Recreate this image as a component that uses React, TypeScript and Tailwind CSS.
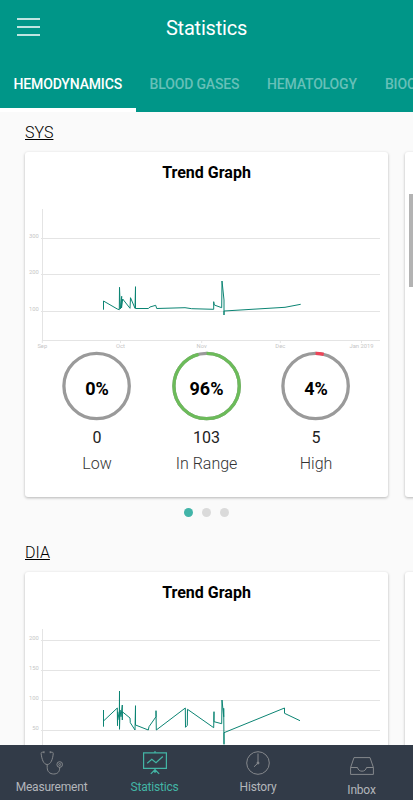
type Label = { text: string; at: number };

const months: Label[] = [
  { text: "Sep", at: 17.3 },
  { text: "Oct", at: 95.5 },
  { text: "Nov", at: 176.7 },
  { text: "Dec", at: 255.3 },
  { text: "Jan 2019", at: 336.5 },
];

const sysRows: Label[] = [
  { text: "300", at: 38.5 },
  { text: "200", at: 74.5 },
  { text: "100", at: 111.5 },
];

const diaRows: Label[] = [
  { text: "200", at: 20.5 },
  { text: "150", at: 50.5 },
  { text: "100", at: 80.5 },
  { text: "50", at: 110.5 },
];

const sysPoints =
  "78.5,109.7 78.5,101 92.3,109 94.3,109.7 94.5,87.3 95.3,109 96.7,96.3 96.5,108 97.7,99 105,108.3 105.5,97.7 110,108.3 110.5,86.7 110.5,108.5 123.3,108.5 125,107 130.7,105.3 131.7,108.5 160,107.7 166.7,108.7 188.7,109.3 188.7,101.7 189.3,105 196.7,107.7 197,81 199,100 199,115 199,111 260,107.3 275.7,104.3";

const diaPoints =
  "78.5,106.7 78.5,90 78.5,101 92.3,88 92.5,105.7 92.7,91.7 94.3,100 94.5,71 94.5,109.3 95,90 96,96.7 97.3,85 97.3,100 97.3,91.7 105,98 105.3,102.7 110,110 110.5,85.7 110.5,105 123.3,110 124,106.7 131,96.7 131,90.7 131.3,110 160.3,88 160.5,107.3 162.3,105.3 162.5,89.3 188.7,107.7 189,91.7 189,101.7 196.7,103.7 197,80 198.7,96.7 198.7,88.3 199,124.3 199,112.7 259.5,88 259.5,93.3 275,100.7";

const rings = [
  { percent: 0, count: 0, label: "Low", color: "#9a9a9a" },
  { percent: 96, count: 103, label: "In Range", color: "#6cbb5a" },
  { percent: 4, count: 5, label: "High", color: "#ee4458" },
];

function TrendChart({ rows, points, top }: { rows: Label[]; points: string; top: number }) {
  return (
    <svg width="363" height="151" viewBox="0 0 363 151" className="block font-['Roboto']">
      <g stroke="#e4e4e4" strokeWidth="1">
        <path d={`M17.5 ${top}V140.5M17 140.5H355`} />
        {rows.map((row) => (
          <path key={row.text} d={`M16 ${row.at}H355`} />
        ))}
        {months.map((month) => (
          <path key={month.text} d={`M${month.at} 140V143`} />
        ))}
      </g>
      <g fill="#c6c6c6" fontSize="5.8">
        {rows.map((row) => (
          <text key={row.text} x="13.7" y={row.at - 0.7} textAnchor="end">
            {row.text}
          </text>
        ))}
        {months.map((month) => (
          <text key={month.text} x={month.at} y="148.4" textAnchor="middle">
            {month.text}
          </text>
        ))}
      </g>
      <polyline points={points} fill="none" stroke="#0b8473" strokeWidth="1" />
    </svg>
  );
}

function Ring({ percent, count, label, color }: (typeof rings)[number]) {
  return (
    <div className="flex w-[109.5px] flex-col items-center">
      <div className="grid size-[70px] place-items-center">
        <svg viewBox="0 0 70 70" className="col-start-1 row-start-1 size-[70px] -rotate-90">
          <circle cx="35" cy="34.6" r="32.7" fill="none" stroke="#9a9a9a" strokeWidth="3.3" />
          {percent > 0 && (
            <circle
              cx="35"
              cy="34.6"
              r="32.7"
              fill="none"
              stroke={color}
              strokeWidth="3.3"
              pathLength="100"
              strokeDasharray={`${percent} 100`}
            />
          )}
        </svg>
        <span className="col-start-1 row-start-1 mt-[6px] text-[18px] leading-6 font-bold text-black">{percent}%</span>
      </div>
      <span className="mt-[5px] text-[16px] leading-6 text-[#222]">{count}</span>
      <span className="mt-[2px] text-[16px] leading-6 font-light text-[#333]">{label}</span>
    </div>
  );
}

function StatCard({ rows, points, top }: { rows: Label[]; points: string; top: number }) {
  return (
    <div className="flex gap-[17px]">
      <div className="h-[344.5px] w-[363px] shrink-0 rounded-[3px] bg-white shadow-[0_1px_3px_rgba(0,0,0,0.28)]">
        <h2 className="h-12 pt-[9px] text-center text-[16px] leading-6 font-bold text-black">Trend Graph</h2>
        <TrendChart rows={rows} points={points} top={top} />
        <div className="flex justify-center">
          {rings.map((ring) => (
            <Ring key={ring.label} {...ring} />
          ))}
        </div>
      </div>
      <div className="h-[344.5px] w-[363px] shrink-0 rounded-[3px] bg-white shadow-[0_1px_3px_rgba(0,0,0,0.28)]" />
    </div>
  );
}

function StethoscopeIcon() {
  return (
    <svg width="24" height="24" viewBox="0 0 24 24" fill="none" stroke="#85888c" strokeWidth="1">
      <path d="M4 1.2H2.2C1.2 1.2 1 2 1.2 3c.6 5 2.3 10.5 6 10.5s5.5-5.5 6-10.5c.1-1-.2-1.8-1.2-1.8h-1.8M4 .2v2M10.2 .2v2" />
      <path d="M7.2 13.5v3c0 4 2.5 6.5 6.5 6.5s6-2.5 6-6v-1" />
      <circle cx="19.7" cy="13.5" r="2.8" />
      <circle cx="19.7" cy="13.5" r="1" />
    </svg>
  );
}

function BoardIcon() {
  return (
    <svg width="24" height="24" viewBox="0 0 24 24" fill="none" stroke="#43b5a5" strokeWidth="1.2">
      <path d="M.6 1.8H23.4V17.3H.6zM12 0v1.8M12 17.3v2M12 18.8l-4.2 4.1M12 18.8l4.2 4.1M12 19v3" />
      <path d="M4.2 12.3l4.6-4 4.2 3.5 6.8-6.3" />
    </svg>
  );
}

function ClockIcon() {
  return (
    <svg width="24" height="24" viewBox="0 0 24 24" fill="none" stroke="#85888c" strokeWidth="1">
      <circle cx="12" cy="12" r="11.3" />
      <path d="M12 2.5v9.5l-4 3.8" />
      <circle cx="12" cy="12" r="1" fill="#85888c" />
    </svg>
  );
}

function InboxIcon() {
  return (
    <svg width="24" height="18" viewBox="0 0 24 18" fill="none" stroke="#85888c" strokeWidth="1">
      <path d="M.6 10.5L4 .6H20l3.4 9.9V17.4H.6zM.6 10.5H7.5c.5 2.2 2.1 3.7 4.5 3.7s4-1.5 4.5-3.7h6.9" />
    </svg>
  );
}

export default function App() {
  return (
    <div className="flex h-[800px] w-[413px] flex-col overflow-hidden bg-[#fafafa] font-['Roboto',sans-serif]">
      <header className="h-[112px] shrink-0 bg-[#009688]">
        <div className="grid h-14 grid-cols-[1fr_auto_1fr] items-center">
          <button className="mb-[2px] ml-[17px] flex w-[23px] flex-col gap-[6px]">
            <span className="h-[2px] bg-[#bfe5e1]" />
            <span className="h-[2px] bg-[#bfe5e1]" />
            <span className="h-[2px] bg-[#bfe5e1]" />
          </button>
          <h1 className="text-[20px] leading-7 tracking-[-0.2px] text-white">Statistics</h1>
        </div>
        <nav className="flex h-14 overflow-hidden text-[14px] font-medium tracking-[-0.15px] whitespace-nowrap text-[#66c0b8]">
          <span className="flex h-14 w-[136px] shrink-0 items-center border-b-[4px] border-white pt-1 pl-[13.5px] text-white">
            HEMODYNAMICS
          </span>
          <span className="flex h-14 shrink-0 items-center pl-[13.5px]">BLOOD GASES</span>
          <span className="flex h-14 shrink-0 items-center pl-[27.5px]">HEMATOLOGY</span>
          <span className="flex h-14 shrink-0 items-center pl-[28px]">BIOCHEMISTRY</span>
        </nav>
      </header>

      <main className="relative h-[633px] shrink-0 overflow-hidden pl-[25px]">
        <h3 className="h-10 pt-[9px] text-[16px] leading-6 font-light text-black underline">SYS</h3>
        <StatCard rows={sysRows} points={sysPoints} top={9} />
        <div className="flex h-[35.5px] w-[363px] justify-center gap-[8.5px] pt-[11px]">
          <span className="size-[9.5px] rounded-full bg-[#42b4a8]" />
          <span className="size-[9.5px] rounded-full bg-[#dadada]" />
          <span className="size-[9.5px] rounded-full bg-[#dadada]" />
        </div>
        <h3 className="h-10 pt-[9px] text-[16px] leading-6 font-light text-black underline">DIA</h3>
        <StatCard rows={diaRows} points={diaPoints} top={9} />
        {/* page scroll thumb */}
        <div className="absolute top-[82px] right-0 h-[93px] w-1 bg-[#b3b3b3]" />
      </main>

      <footer className="flex h-[55px] shrink-0 bg-[#323b48] pt-[6px] text-[12px] leading-4 tracking-[-0.2px] text-[#b3b6bb]">
        <div className="flex w-[103px] flex-col items-center gap-1">
          <StethoscopeIcon />
          <span>Measurement</span>
        </div>
        <div className="flex w-[103px] flex-col items-center gap-1 text-[#43b5a5]">
          <BoardIcon />
          <span>Statistics</span>
        </div>
        <div className="flex w-[104px] flex-col items-center gap-1">
          <ClockIcon />
          <span>History</span>
        </div>
        <div className="flex w-[103px] flex-col items-center gap-[7px] pt-[6px]">
          <InboxIcon />
          <span>Inbox</span>
        </div>
      </footer>
    </div>
  );
}
